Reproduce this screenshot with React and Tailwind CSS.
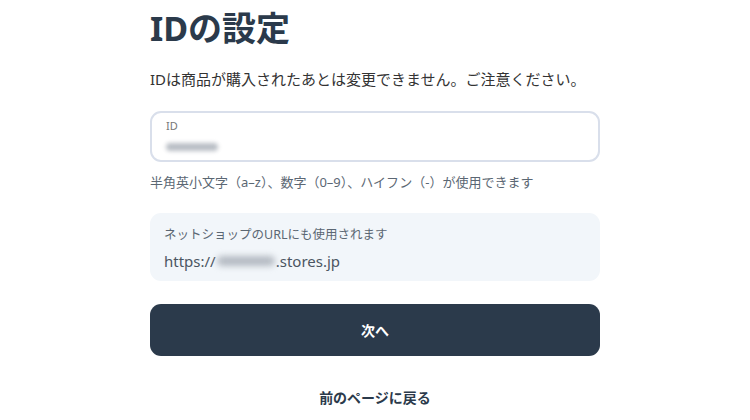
export default function App() {
  const font = { fontFamily: '"Noto Sans", "Noto Sans CJK JP", sans-serif' };
  return (
    <div className="w-[750px] h-[420px] bg-white overflow-hidden" style={font}>
      <div className="w-[450px] mx-auto flex flex-col">
        <h1 className="mt-[7px] text-[34px] leading-[42px] font-bold text-[#2b3a4b]">IDの設定</h1>
        <p className="mt-[19px] text-[15px] leading-[22px] text-[#333]">
          IDは商品が購入されたあとは変更できません。ご注意ください。
        </p>

        <div className="mt-[21px] h-[51px] rounded-[11px] border-2 border-[#d9dfeb] px-[14px] pt-[5px]">
          <div className="text-[11px] leading-[16px] text-[#777]">ID</div>
          <div className="mt-[5px] flex items-center h-[16px]">
            <span className="block w-[52px] h-[8px] rounded-full bg-[#b9bec5] blur-[2px]" />
          </div>
        </div>
        <p className="mt-[11px] text-[13px] leading-[18px] text-[#5b6773]">
          半角英小文字（a–z）、数字（0–9）、ハイフン（-）が使用できます
        </p>

        <div className="mt-[22px] h-[68px] rounded-[11px] bg-[#f2f6fa] px-[14px] pt-[12px]">
          <div className="text-[12.5px] leading-[20px] text-[#5b6773]">ネットショップのURLにも使用されます</div>
          <div className="mt-[5px] flex items-center text-[15px] leading-[22px] text-[#4b5562]">
            https://
            <span className="block w-[58px] h-[10px] rounded-full bg-[#b4bac2] blur-[3px] mx-[1px]" />
            .stores.jp
          </div>
        </div>

        <button className="mt-[23px] h-[52px] rounded-[11px] bg-[#2b3a4b] text-white text-[14px] font-bold">
          次へ
        </button>

        <div className="mt-[32px] text-center text-[14px] leading-[20px] font-bold text-[#2b3a4b]">
          前のページに戻る
        </div>
      </div>
    </div>
  );
}
